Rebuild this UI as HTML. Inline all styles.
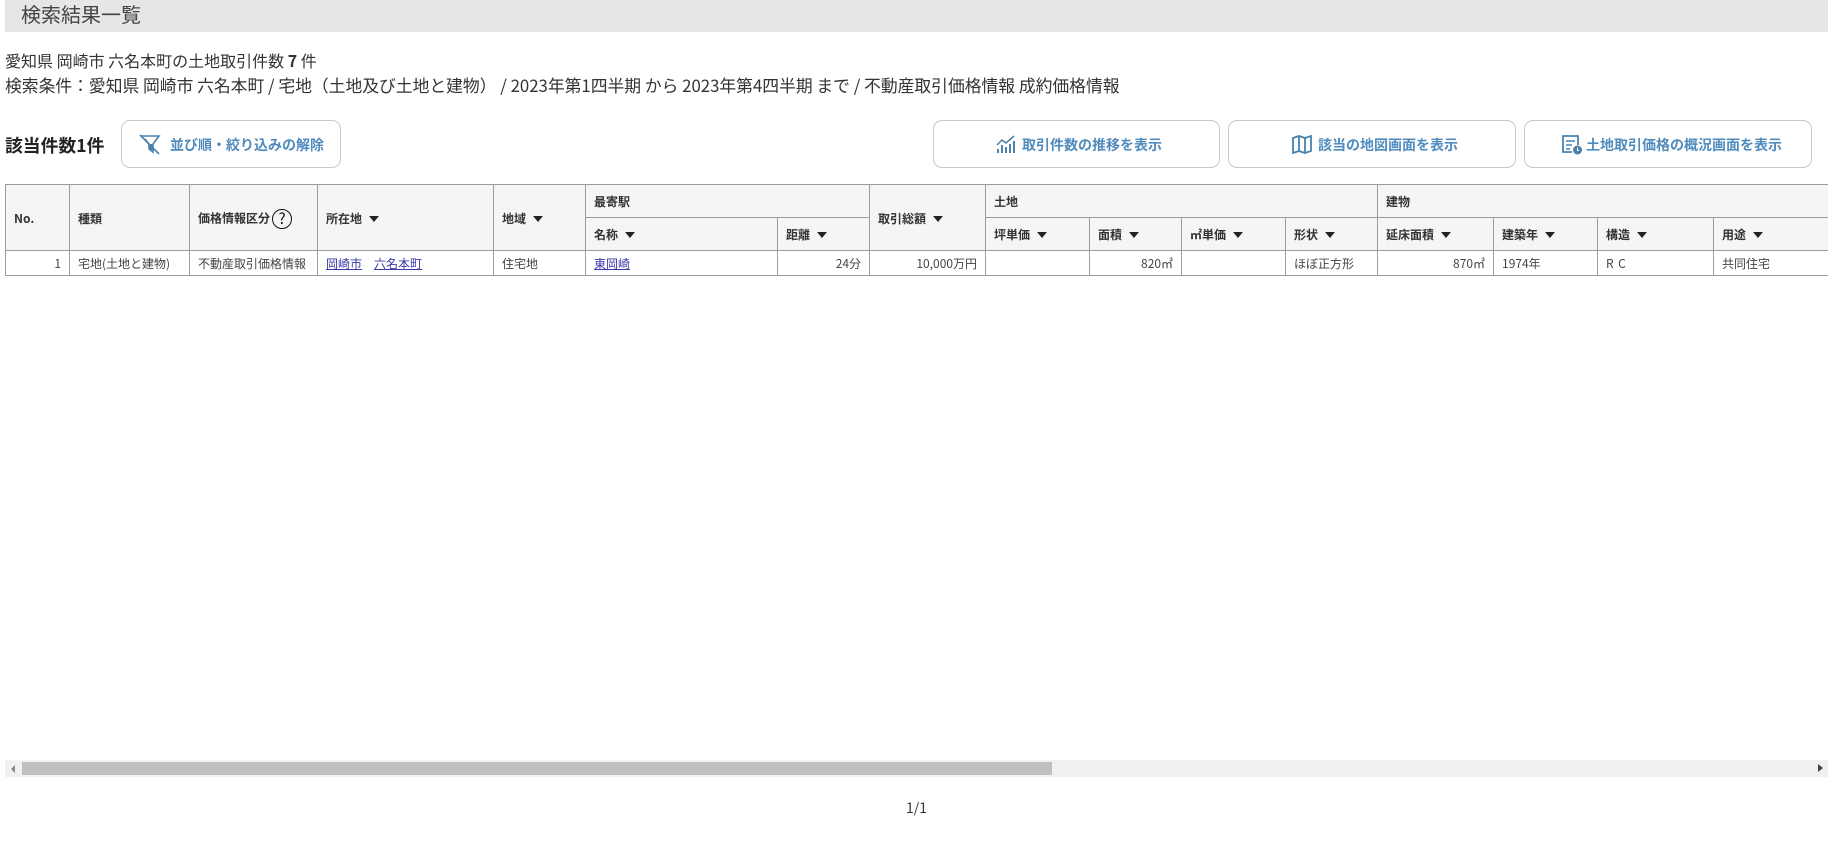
<!DOCTYPE html>
<html lang="ja">
<head>
<meta charset="utf-8">
<title>検索結果一覧</title>
<style>
html,body{margin:0;padding:0;background:#fff}
body{width:1834px;height:841px;position:relative;overflow:hidden;font-family:"Liberation Sans","Noto Sans CJK JP",sans-serif;color:#333;filter:blur(.3px)}
.jp{font-family:"Noto Sans CJK JP","Liberation Sans",sans-serif}
.a{position:absolute;white-space:nowrap}
.title{left:5px;top:0;width:1823px;height:32px;background:#e6e6e6;font-size:20px;line-height:28px;padding-left:16px;box-sizing:border-box;color:#444}
.line{left:5px;line-height:24px;color:#333}
.count{left:5px;top:130px;font-size:17.8px;line-height:30px;font-weight:700;color:#222}
.btn{position:absolute;top:120px;height:48px;box-sizing:border-box;border:1px solid #c8c8c8;border-radius:9px;background:#fff}
.bt{position:absolute;top:133px;font-size:14px;line-height:24px;font-weight:700;color:#4f8bbd;white-space:nowrap}
svg.i{position:absolute;fill:none;stroke:#4a82ad}
.wrap{position:absolute;left:5px;top:184px;width:1823px;height:93px;overflow:hidden}
table{border-collapse:collapse;table-layout:fixed;width:1823px;font-size:12px;color:#333}
th,td{border:1px solid #9c9c9c;padding:0 8px;box-sizing:border-box;white-space:nowrap;overflow:hidden;text-align:left}
th{background:#f5f5f5;font-weight:700;height:33px;color:#333}
th[rowspan]{padding-top:2px}
td{height:25px;font-weight:400;background:#fff;color:#444}
td.r{text-align:right}
a{color:#3b3ba8;text-decoration:underline}
.s{display:inline-block;width:0;height:0;border-left:5px solid transparent;border-right:5px solid transparent;border-top:6px solid #222;margin-left:7px;vertical-align:1px}
.q{display:inline-block;width:20px;height:20px;box-sizing:border-box;border:1.6px solid #111;border-radius:50%;text-align:center;line-height:17px;font-size:15px;font-weight:400;color:#111;margin-left:2px;vertical-align:middle}
.track{position:absolute;left:5px;top:760px;width:1823px;height:17px;background:#f1f1f1}
.thumb{position:absolute;left:22px;top:762px;width:1030px;height:13px;background:#bfbfbf}
.al{position:absolute;left:11px;top:765px;width:0;height:0;border-top:4px solid transparent;border-bottom:4px solid transparent;border-right:4px solid #888}
.ar{position:absolute;left:1818px;top:764px;width:0;height:0;border-top:4px solid transparent;border-bottom:4px solid transparent;border-left:5px solid #444}
.page{left:906px;top:797px;font-size:14px;line-height:22px;color:#333}
</style>
</head>
<body class="jp">
<div class="a title">検索結果一覧</div>
<div class="a line" style="top:48px;font-size:16px">愛知県 岡崎市 六名本町の土地取引件数 <b>7</b> 件</div>
<div class="a line" style="top:73px;font-size:16.8px">検索条件：愛知県 岡崎市 六名本町 / 宅地（土地及び土地と建物） / 2023年第1四半期 から 2023年第4四半期 まで / 不動産取引価格情報 成約価格情報</div>

<div class="a count">該当件数1件</div>

<div class="btn" style="left:121px;width:220px"></div>
<svg class="i" style="left:139px;top:134px" width="22" height="21" viewBox="0 0 22 21" stroke-width="1.6"><path d="M2 2H20L14 10V18L10 15V10L6 5"/><path d="M10 10H14V18L10 15Z" fill="#4a82ad" stroke="none"/><path d="M1 1L20 20"/></svg>
<div class="bt" style="left:170px">並び順・絞り込みの解除</div>

<div class="btn" style="left:933px;width:287px"></div>
<svg class="i" style="left:996px;top:135px" width="20" height="19" viewBox="0 0 20 19" stroke-width="1.5"><path d="M1 10L6 5L10 8L18 1"/><path d="M2 18V14M6 18V10M10 18V12M14 18V9M18 18V6" stroke-width="2"/></svg>
<div class="bt" style="left:1022px">取引件数の推移を表示</div>

<div class="btn" style="left:1228px;width:288px"></div>
<svg class="i" style="left:1292px;top:135px" width="20" height="19" viewBox="0 0 20 19" stroke-width="1.8"><path d="M1 3L7 1L13 3L19 1V16L13 18L7 16L1 18Z"/><path d="M7 1V16M13 3V18"/></svg>
<div class="bt" style="left:1318px">該当の地図画面を表示</div>

<div class="btn" style="left:1524px;width:288px"></div>
<svg class="i" style="left:1561px;top:135px" width="22" height="20" viewBox="0 0 22 20" stroke-width="1.8"><path d="M11 17H2V1H17V10"/><path d="M5 6H14M5 10H11M5 14H9" stroke-width="1.6"/><circle cx="16.5" cy="15" r="4.5" fill="#4a82ad" stroke="none"/><path d="M16.5 12.5V15.5H18" stroke="#fff" stroke-width="1"/></svg>
<div class="bt" style="left:1586px">土地取引価格の概況画面を表示</div>

<div class="wrap">
<table>
<colgroup>
<col style="width:64px"><col style="width:120px"><col style="width:128px"><col style="width:176px"><col style="width:92px"><col style="width:192px"><col style="width:92px"><col style="width:116px"><col style="width:104px"><col style="width:92px"><col style="width:104px"><col style="width:92px"><col style="width:116px"><col style="width:104px"><col style="width:116px"><col style="width:115px">
</colgroup>
<tr>
<th rowspan="2">No.</th>
<th rowspan="2">種類</th>
<th rowspan="2">価格情報区分<span class="q">?</span></th>
<th rowspan="2">所在地<span class="s"></span></th>
<th rowspan="2">地域<span class="s"></span></th>
<th colspan="2">最寄駅</th>
<th rowspan="2">取引総額<span class="s"></span></th>
<th colspan="4">土地</th>
<th colspan="4">建物</th>
</tr>
<tr>
<th>名称<span class="s"></span></th>
<th>距離<span class="s"></span></th>
<th>坪単価<span class="s"></span></th>
<th>面積<span class="s"></span></th>
<th>㎡単価<span class="s"></span></th>
<th>形状<span class="s"></span></th>
<th>延床面積<span class="s"></span></th>
<th>建築年<span class="s"></span></th>
<th>構造<span class="s"></span></th>
<th>用途<span class="s"></span></th>
</tr>
<tr>
<td class="r">1</td>
<td>宅地(土地と建物)</td>
<td>不動産取引価格情報</td>
<td><a>岡崎市</a>　<a>六名本町</a></td>
<td>住宅地</td>
<td><a>東岡崎</a></td>
<td class="r">24分</td>
<td class="r">10,000万円</td>
<td></td>
<td class="r">820㎡</td>
<td></td>
<td>ほぼ正方形</td>
<td class="r">870㎡</td>
<td>1974年</td>
<td style="letter-spacing:.9px">R C</td>
<td>共同住宅</td>
</tr>
</table>
</div>

<div class="track"></div>
<div class="thumb"></div>
<div class="al"></div>
<div class="ar"></div>
<div class="a page">1/1</div>
</body>
</html>
